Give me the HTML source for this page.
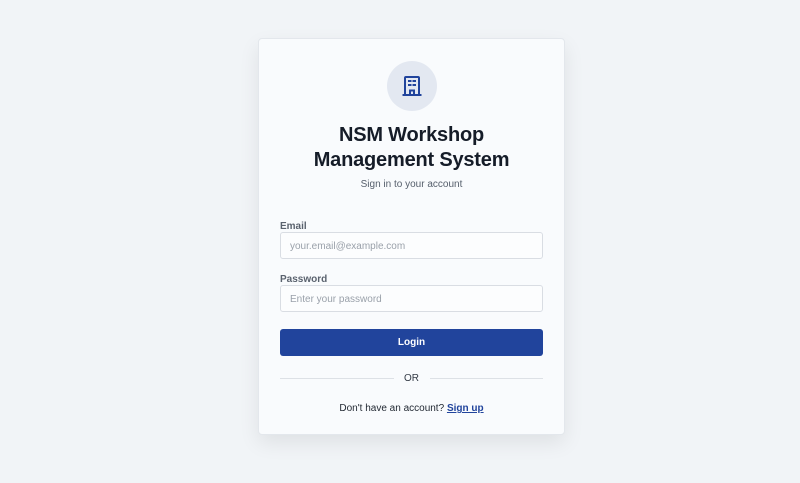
<!DOCTYPE html>
<html><head><style>
body{margin:0;width:800px;height:483px;background:#f1f4f7;font-family:"Liberation Sans",sans-serif;position:relative;overflow:hidden}
.card{position:absolute;left:258px;top:38px;width:307px;height:397px;background:#f9fbfd;border:1px solid #e3e7ec;border-radius:4px;box-sizing:border-box;box-shadow:0 8px 20px rgba(0,0,0,.08)}
.circ{position:absolute;left:128px;top:22px;width:50px;height:50px;border-radius:50%;background:#e3e8f1}
.circ svg{position:absolute;left:13px;top:13px}
h1{position:absolute;left:0;width:100%;top:84px;margin:0;text-align:center;font-size:20px;line-height:25px;font-weight:bold;color:#151c28;letter-spacing:-0.2px}
.sub{position:absolute;left:0;width:100%;top:140px;text-align:center;font-size:10px;color:#555e6b}
.lab{position:absolute;left:21px;font-size:10px;font-weight:bold;color:#5a626e}
.inp{position:absolute;left:21px;width:263px;height:27px;border:1px solid #d9dde3;border-radius:3px;box-sizing:border-box;background:#fcfdfe;font-size:10px;color:#9aa1aa;padding:8px 0 0 9px}
.btn{position:absolute;left:21px;top:290px;width:263px;height:27px;background:#21449c;border-radius:3px;color:#fff;font-size:10px;font-weight:bold;text-align:center;line-height:27px}
.line{position:absolute;top:339px;height:1px;background:#dde1e6}
.or{position:absolute;left:0;width:100%;top:334px;text-align:center;font-size:10px;color:#333a45}
.ft{position:absolute;left:0;width:100%;top:364px;text-align:center;font-size:10px;color:#1f2630}
.ft a{color:#21449c;font-weight:bold;text-decoration:underline}
</style></head><body>
<div class="card">
<div class="circ"><svg width="24" height="24" viewBox="0 0 24 24" fill="none" stroke="#21449c" stroke-width="2"><rect x="5" y="3" width="14" height="18" rx="1"/><path d="M2.5 21h19M10 21v-4.5h4V21"/><path d="M9 7h1.5M13.5 7H15M9 11h1.5M13.5 11H15" stroke-linecap="square"/></svg></div>
<h1>NSM Workshop<br>Management System</h1>
<div class="sub">Sign in to your account</div>
<div class="lab" style="top:182px">Email</div>
<div class="inp" style="top:193px">your.email@example.com</div>
<div class="lab" style="top:235px">Password</div>
<div class="inp" style="top:246px">Enter your password</div>
<div class="btn">Login</div>
<div class="line" style="left:21px;width:114px"></div>
<div class="line" style="left:171px;width:113px"></div>
<div class="or">OR</div>
<div class="ft">Don't have an account? <a>Sign up</a></div>
</div>
</body></html>
